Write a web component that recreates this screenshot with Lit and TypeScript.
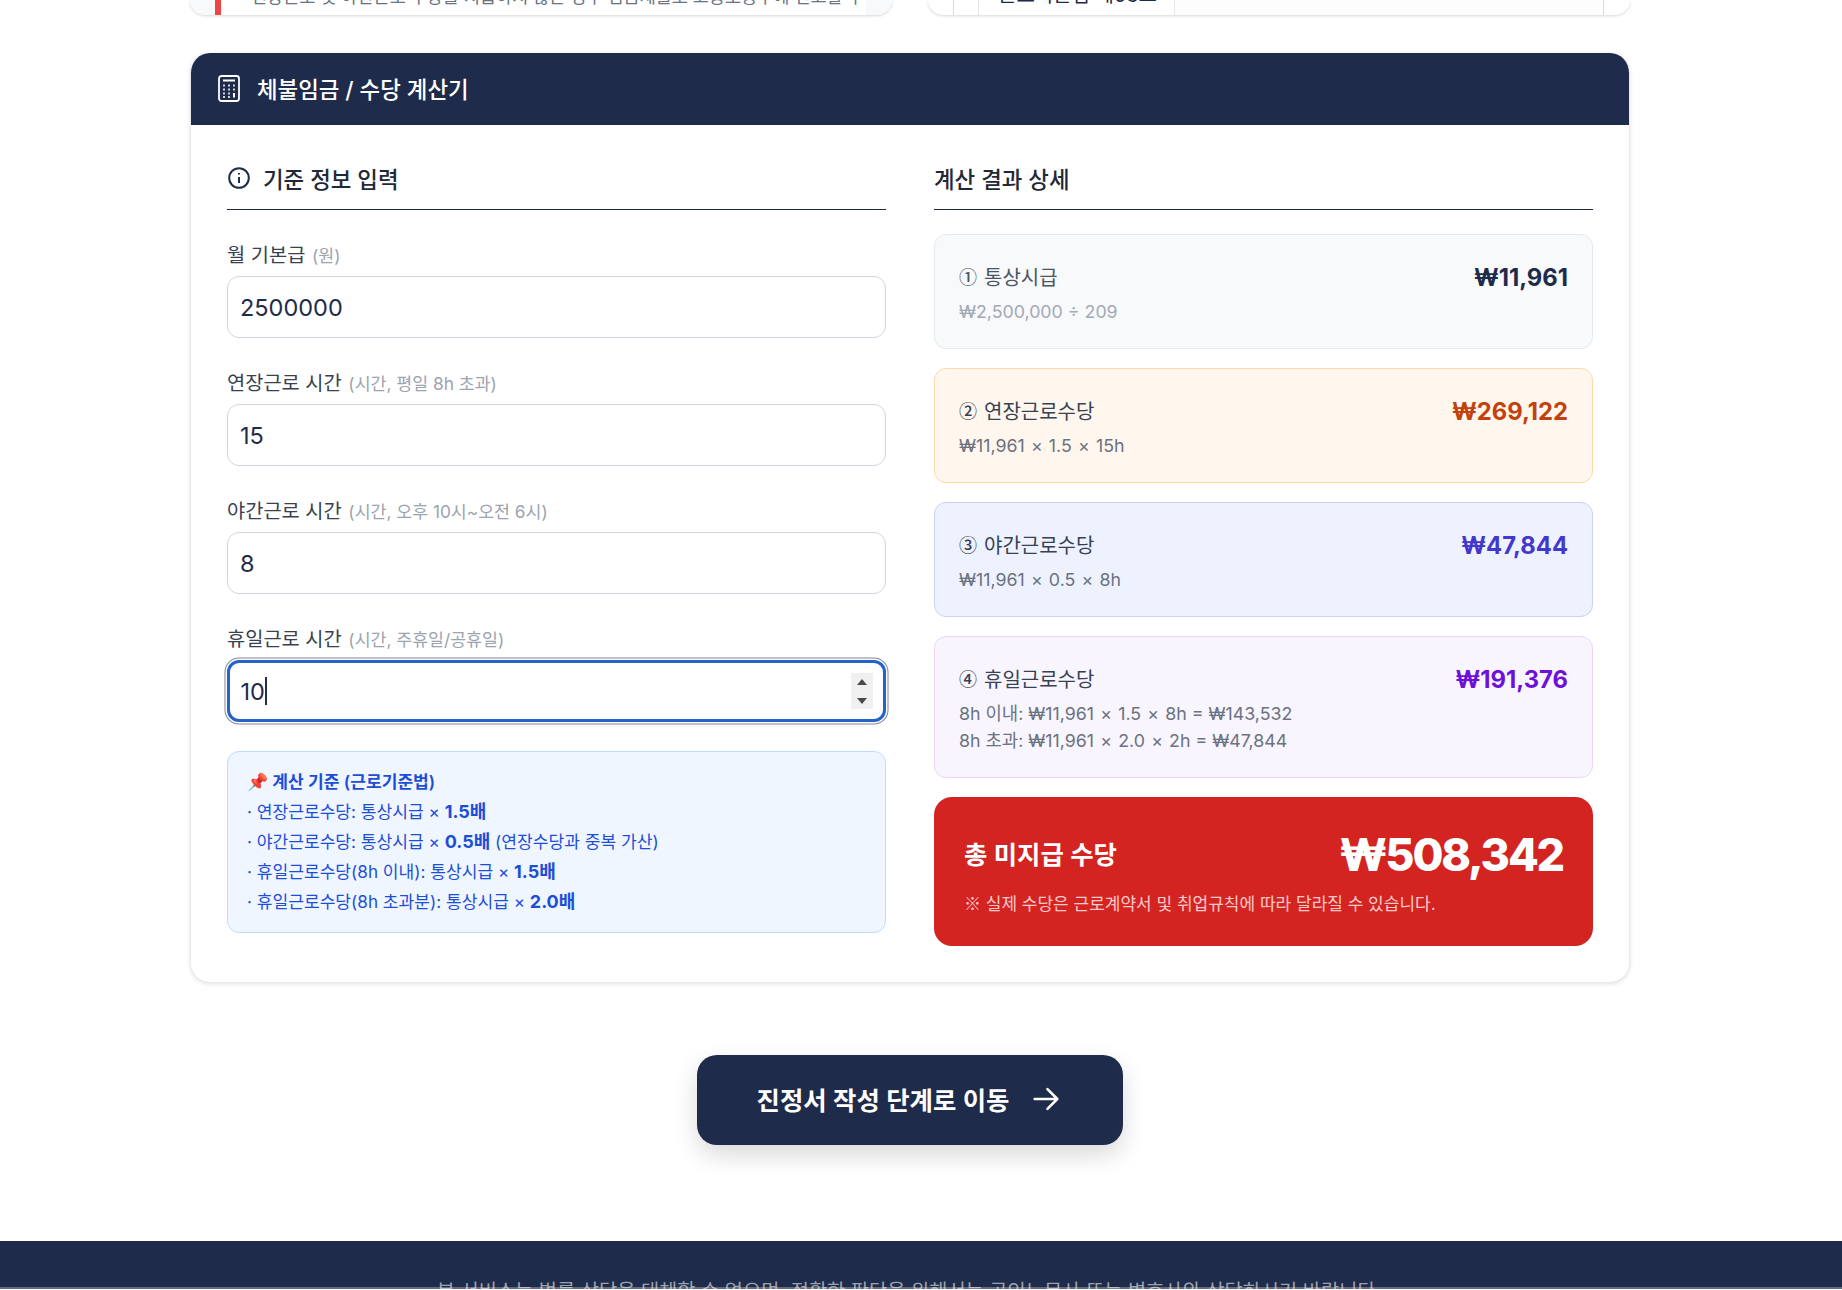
import { LitElement, html, css } from "lit";
import { customElement } from "lit/decorators.js";

@customElement("app-root")
export class AppRoot extends LitElement {
  static styles = css`
    :host { display: block; height: 1290px; overflow: hidden; background: #fff; font-family: Inter, "Noto Sans CJK KR", "Noto Sans", sans-serif; color: #1f2b4a; }
    * { box-sizing: border-box; }
    .cjk { font-family: "Noto Sans CJK KR", sans-serif; }
    .x { margin: 0 1.2px; }
    .main { width: 1820px; display: flex; flex-direction: column; align-items: center; }
    .top { width: 1440px; height: 15px; display: grid; grid-template-columns: 702px 702px; justify-content: space-between; align-items: end; }
    .tcard { height: 15px; background: #fff; border-radius: 0 0 22px 22px; box-shadow: 0 1px 3px rgba(0,0,0,.16); display: flex; overflow: hidden; }
    .tl .a { width: 25px; background: #f8f9fb; }
    .tl .b { flex: 1; border-left: 6px solid #ef4444; font-size: 17.5px; line-height: 15px; color: #6b7280; padding-left: 30px; white-space: nowrap; overflow: hidden; }
    .tl .b span { display: block; margin-top: -11px; }
    .tl .c { width: 26px; background: #f8f9fb; }
    .tr .a { width: 26px; border-right: 1px solid #fecaca; }
    .tr .b { width: 25px; border-right: 1px solid #e5e7eb; }
    .tr .c { width: 196px; border-right: 1px solid #e5e7eb; font-size: 20px; line-height: 15px; padding-left: 19px; color: #1f2b4a; white-space: nowrap; overflow: hidden; }
    .tr .c span { display: block; margin-top: -12px; }
    .tr .d { flex: 1; background: #fdfdfd; border-right: 1px solid #fecaca; }
    .tr .e { width: 26px; }

    .card { width: 1440px; height: 930px; margin-top: 38px; border-radius: 20px; background: #fff; border: 1px solid #e8eaef; border-top: 0; box-shadow: 0 1px 4px rgba(0,0,0,.12); overflow: hidden; }
    .head { height: 72px; margin: 0 -1px; background: #1f2b4a; color: #fff; display: flex; align-items: center; gap: 17px; padding: 0 0 2px 28px; font-size: 22.4px; font-weight: 500; }
    .body { display: grid; grid-template-columns: 659px 659px; column-gap: 48px; padding: 28px 36px 0; }
    .col { display: flex; flex-direction: column; min-width: 0; }
    .st { height: 57px; border-bottom: 1px solid #1f2937; display: flex; align-items: center; gap: 13px; padding: 0 0 6px; font-size: 22.4px; font-weight: 500; color: #1f2937; }
    .st svg { flex: none; margin-left: 1px; }
    .fields { display: flex; flex-direction: column; gap: 30px; margin-top: 30px; }
    .lab { display: block; height: 36px; font-size: 19.8px; line-height: 31px; color: #374151; white-space: nowrap; }
    .lab small { font-size: 17.3px; color: #9ca3af; margin-left: 1px; }
    .wrap { position: relative; display: block; }
    input { display: block; width: 100%; height: 62px; border: 1.5px solid #d1d5e0; border-radius: 12px; padding: 0 12px; font: 400 23.5px Inter, "Noto Sans CJK KR", sans-serif; color: #1f2b4a; background: #fff; outline: none; caret-color: transparent; }
    input::-webkit-inner-spin-button, input::-webkit-outer-spin-button { -webkit-appearance: none; appearance: none; margin: 0; }
    input:focus { border: 3px solid #2563c9; box-shadow: 0 0 0 1.5px #fff, 0 0 0 2.5px #7d869c; padding: 0 10.5px; }
    .caret { position: absolute; left: 38px; top: 17px; width: 1.5px; height: 28px; background: #1f2b4a; }
    .spin { position: absolute; right: 13px; top: 13px; width: 22px; height: 36px; background: #f0f0f0; display: flex; flex-direction: column; align-items: center; justify-content: space-between; padding: 6px 0 5px; }
    .spin i { width: 0; height: 0; border-left: 5px solid transparent; border-right: 5px solid transparent; }
    .spin .u { border-bottom: 6px solid #4a4a4a; }
    .spin .w { border-top: 6px solid #4a4a4a; }
    .info { margin-top: 29px; height: 182px; background: #eff6ff; border: 1px solid #bfdbfe; border-radius: 12px; padding: 15px 19px; font-size: 17.1px; line-height: 30px; color: #1d4ed8; }
    .info b { font-weight: 700; font-size: 18px; }
    .info .t { font-weight: 600; }
    .rs { display: flex; flex-direction: column; gap: 19px; margin-top: 24px; }
    .r { border: 1px solid; border-radius: 12px; padding: 24px 24px 0; height: 115px; }
    .r.tall { height: 142px; }
    .r .row { display: flex; justify-content: space-between; align-items: center; height: 34px; }
    .r .n { font-size: 20px; color: #374151; display: flex; align-items: center; gap: 7px; }
    .r .n .cjk { font-size: 18px; font-weight: 500; }
    .r .v { font-size: 23.8px; font-weight: 700; padding-top: 3px; }
    .r .d { margin-top: 5px; font-size: 17.8px; line-height: 27px; color: #6b7280; }
    .r1 { background: #f8f9fb; border-color: #e6e9f2; }
    .r1 .v { color: #1f2b4a; } .r1 .d { color: #a3a9b6; } .r1 .n { color: #4b5563; }
    .r2 { background: #fff7ed; border-color: #fed7aa; } .r2 .v { color: #c2410c; }
    .r3 { background: #eef2ff; border-color: #c7d2fe; } .r3 .v { color: #4338ca; }
    .r4 { background: #f8f5ff; border-color: #e9d5ff; } .r4 .v { color: #6d11d9; }
    .total { height: 149px; background: #d32421; border-radius: 18px; color: #fff; padding: 22px 30px 0; }
    .total .row { display: flex; justify-content: space-between; align-items: center; height: 68px; }
    .total .n { font-size: 25.4px; font-weight: 600; }
    .total .v { font-size: 44.8px; font-weight: 800; letter-spacing: -2.15px; padding-top: 4px; }
    .total .d { margin-top: 3px; font-size: 17px; color: #fecaca; }
    .cta { margin-top: 72px; width: 426px; height: 90px; border: 0; border-radius: 20px; background: #1f2b4a; color: #fff; display: flex; align-items: center; justify-content: center; gap: 20px; padding: 0 0 2px; font: 600 25.4px Inter, "Noto Sans CJK KR", sans-serif; box-shadow: 0 10px 25px rgba(0,0,0,.15); }
    .foot { position: relative; margin-top: 96px; height: 48px; background: #1f2b4a; color: #9ca3af; font-size: 19.8px; text-align: center; padding-top: 34px; white-space: nowrap; overflow: hidden; }
    .foot::after { content: ""; position: absolute; left: 0; right: 0; bottom: 0; height: 2px; background: rgba(255,255,255,.3); }
    .foot div { width: 1818px; }
  `;

  firstUpdated() {
    const el = this.renderRoot.querySelector("#hol") as HTMLInputElement | null;
    el?.focus();
  }

  render() {
    const fields = [
      ["월 기본급", "(원)", "2500000"],
      ["연장근로 시간", "(시간, 평일 8h 초과)", "15"],
      ["야간근로 시간", "(시간, 오후 10시~오전 6시)", "8"],
    ];
    const x = html`<span class="x">×</span>`;
    return html`
      <div class="main">
        <div class="top">
          <div class="tcard tl">
            <div class="a"></div>
            <div class="b"><span>연장근로 및 야간근로 수당을 지급하지 않은 경우 임금체불로 고용노동부에 신고할 수 있습니다</span></div>
            <div class="c"></div>
          </div>
          <div class="tcard tr">
            <div class="a"></div><div class="b"></div>
            <div class="c"><span>근로기준법 제53조</span></div>
            <div class="d"></div><div class="e"></div>
          </div>
        </div>

        <section class="card">
          <header class="head">
            <svg width="22" height="27" viewBox="0 0 22 27" fill="none" stroke="#fff" stroke-width="1.8">
              <rect x="1" y="1" width="20" height="25" rx="2.5"/>
              <path d="M5 5.5h12" stroke-width="2.2"/>
              <path d="M5.2 10.5h1.6M10.2 10.5h1.6M15.2 10.5h1.6M5.2 14.5h1.6M10.2 14.5h1.6M15.2 14.5h1.6M5.2 18.5h1.6M10.2 18.5h1.6M5.2 22h1.6M10.2 22h1.6M16 18v4.6" stroke-width="2"/>
            </svg>
            <span>체불임금 / 수당 계산기</span>
          </header>
          <div class="body">
            <div class="col">
              <div class="st">
                <svg width="22" height="22" viewBox="0 0 22 22" fill="none" stroke="#1f2b4a" stroke-width="2">
                  <circle cx="11" cy="11" r="9.8"/><path d="M11 10v6"/><path d="M11 6v1.4"/>
                </svg>
                <span>기준 정보 입력</span>
              </div>
              <div class="fields">
                ${fields.map(([l, s, v]) => html`
                  <label><span class="lab">${l} <small>${s}</small></span><span class="wrap"><input type="number" .value=${v} /></span></label>
                `)}
                <label><span class="lab">휴일근로 시간 <small>(시간, 주휴일/공휴일)</small></span>
                  <span class="wrap"><input id="hol" type="number" .value=${"10"} /><span class="caret"></span><span class="spin"><i class="u"></i><i class="w"></i></span></span>
                </label>
              </div>
              <div class="info">
                <div class="t">📌 계산 기준 (근로기준법)</div>
                <div>· 연장근로수당: 통상시급 × <b>1.5배</b></div>
                <div>· 야간근로수당: 통상시급 × <b>0.5배</b> (연장수당과 중복 가산)</div>
                <div>· 휴일근로수당(8h 이내): 통상시급 × <b>1.5배</b></div>
                <div>· 휴일근로수당(8h 초과분): 통상시급 × <b>2.0배</b></div>
              </div>
            </div>
            <div class="col">
              <div class="st"><span>계산 결과 상세</span></div>
              <div class="rs">
                <div class="r r1"><div class="row"><span class="n"><span class="cjk">①</span><span>통상시급</span></span><span class="v">₩11,961</span></div><div class="d">₩2,500,000 ÷ 209</div></div>
                <div class="r r2"><div class="row"><span class="n"><span class="cjk">②</span><span>연장근로수당</span></span><span class="v">₩269,122</span></div><div class="d">₩11,961 ${x} 1.5 ${x} 15h</div></div>
                <div class="r r3"><div class="row"><span class="n"><span class="cjk">③</span><span>야간근로수당</span></span><span class="v">₩47,844</span></div><div class="d">₩11,961 ${x} 0.5 ${x} 8h</div></div>
                <div class="r r4 tall"><div class="row"><span class="n"><span class="cjk">④</span><span>휴일근로수당</span></span><span class="v">₩191,376</span></div><div class="d">8h 이내: ₩11,961 ${x} 1.5 ${x} 8h = ₩143,532<br />8h 초과: ₩11,961 ${x} 2.0 ${x} 2h = ₩47,844</div></div>
                <div class="total"><div class="row"><span class="n">총 미지급 수당</span><span class="v">₩508,342</span></div><div class="d"><span class="cjk">※</span> 실제 수당은 근로계약서 및 취업규칙에 따라 달라질 수 있습니다.</div></div>
              </div>
            </div>
          </div>
        </section>

        <button class="cta"><span>진정서 작성 단계로 이동</span>
          <svg width="34" height="34" viewBox="0 0 24 24" fill="none" stroke="#fff" stroke-width="1.8" stroke-linecap="round" stroke-linejoin="round"><path d="M4 12h16M13 5l7 7-7 7"/></svg>
        </button>
      </div>
      <footer class="foot"><div>본 서비스는 법률 상담을 대체할 수 없으며, 정확한 판단을 위해서는 공인노무사 또는 변호사와 상담하시기 바랍니다.</div></footer>
    `;
  }
}
